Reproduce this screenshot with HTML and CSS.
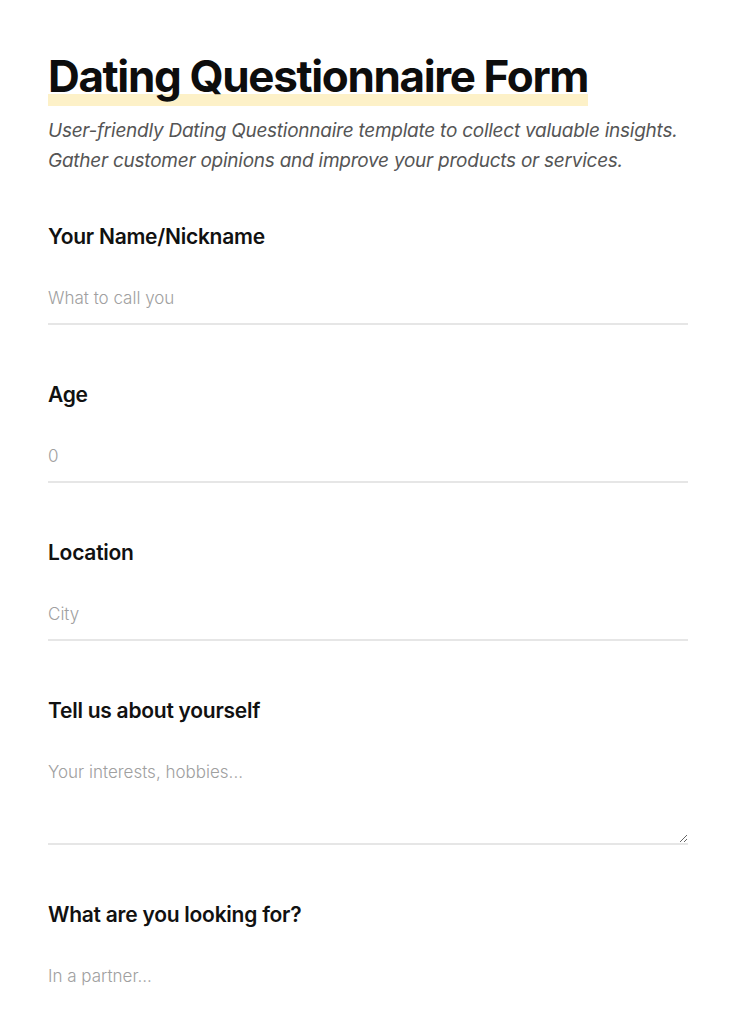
FILE: index.html
```html
<!DOCTYPE html>
<html lang="en">
<head>
<meta charset="utf-8">
<title>Dating Questionnaire Form</title>
<link rel="stylesheet" href="styles.css">
</head>
<body>
<main class="page">
  <header class="intro">
    <h1 class="title"><span class="title-mark">Dating Questionnaire Form</span></h1>
    <p class="subtitle">User-friendly Dating Questionnaire template to collect valuable insights. Gather customer opinions and improve your products or services.</p>
  </header>
  <form class="form">
    <div class="field">
      <label class="label" for="name">Your Name/Nickname</label>
      <input class="input" id="name" type="text" placeholder="What to call you">
    </div>
    <div class="field">
      <label class="label" for="age">Age</label>
      <input class="input" id="age" type="text" placeholder="0">
    </div>
    <div class="field">
      <label class="label" for="loc">Location</label>
      <input class="input" id="loc" type="text" placeholder="City">
    </div>
    <div class="field">
      <label class="label" for="about">Tell us about yourself</label>
      <textarea class="input textarea" id="about" placeholder="Your interests, hobbies..."></textarea>
    </div>
    <div class="field">
      <label class="label" for="look">What are you looking for?</label>
      <textarea class="input textarea" id="look" placeholder="In a partner..."></textarea>
    </div>
  </form>
</main>
</body>
</html>
```
FILE: styles.css
```css
html, body {
  margin: 0;
  padding: 0;
  background: #ffffff;
}
body {
  font-family: Inter, "Noto Sans", sans-serif;
  color: #111111;
}
.page {
  width: 640px;
  padding: 49px 48px 40px;
}
.intro {
  margin-bottom: 49px;
}
.title {
  margin: 0;
  font-size: 44px;
  line-height: 54px;
  font-weight: 700;
  letter-spacing: -1.36px;
  color: #0d0d0d;
}
.title-mark {
  padding-bottom: 4px;
  background: linear-gradient(to bottom, transparent 77%, #fdf1c8 77%, #fdf1c8 98%, transparent 98%);
}
.subtitle {
  margin: 13px 0 0;
  font-size: 19px;
  line-height: 30px;
  font-style: italic;
  color: #555555;
  letter-spacing: -0.25px;
}
.form {
  display: flex;
  flex-direction: column;
  gap: 58px;
}
.field {
  display: flex;
  flex-direction: column;
  gap: 24px;
}
.label {
  font-size: 21px;
  line-height: 24px;
  font-weight: 600;
  color: #111111;
  letter-spacing: -0.25px;
}
.input {
  font-family: Inter, "Noto Sans", sans-serif;
  font-size: 17px;
  line-height: 20px;
  font-weight: 300;
  padding: 15px 0 15px;
  border: 0;
  border-bottom: 2px solid #e6e6e6;
  outline: none;
  color: #333333;
  background: transparent;
  width: 100%;
  box-sizing: border-box;
  margin: 0;
}
.input::placeholder {
  color: #a0a0a0;
}
.textarea {
  height: 98px;
  resize: vertical;
  display: block;
}
```
